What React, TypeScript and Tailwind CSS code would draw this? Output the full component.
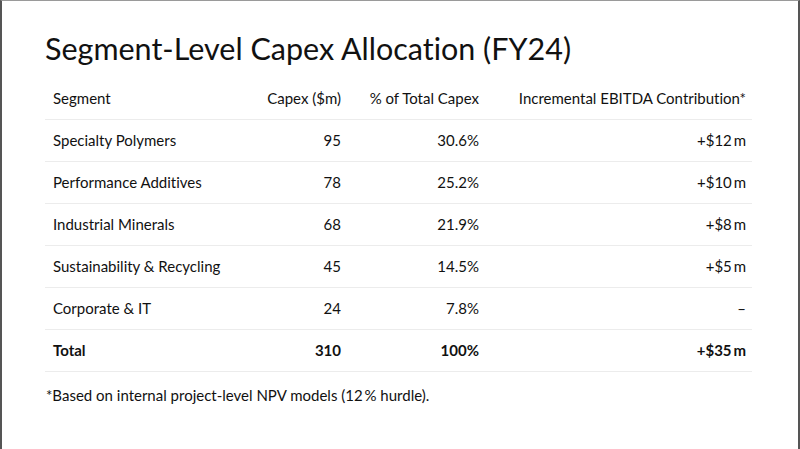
const rows = [
  { segment: "Specialty Polymers", capex: "95", pct: "30.6%", ebitda: "+$12\u2009m" },
  { segment: "Performance Additives", capex: "78", pct: "25.2%", ebitda: "+$10\u2009m" },
  { segment: "Industrial Minerals", capex: "68", pct: "21.9%", ebitda: "+$8\u2009m" },
  { segment: "Sustainability & Recycling", capex: "45", pct: "14.5%", ebitda: "+$5\u2009m" },
  { segment: "Corporate & IT", capex: "24", pct: "7.8%", ebitda: "\u2013" },
];

export default function App() {
  return (
    <div
      className="w-[800px] h-[449px] overflow-hidden bg-white text-[#111] border-t border-t-[#9a9a9a] border-x-2 border-x-[#555] pl-[43px] pr-[46px] [font-variant-ligatures:none]"
      style={{ fontFamily: "Lato, 'Noto Sans', sans-serif" }}
    >
      <h1 className="pt-[28px] mb-[10px] text-[30.5px] leading-[38px] font-normal">
        Segment-Level Capex Allocation (FY24)
      </h1>

      <table className="w-[707px] table-fixed border-collapse text-[15px]">
        <colgroup>
          <col className="w-[210px]" />
          <col className="w-[94px]" />
          <col className="w-[138px]" />
          <col className="w-[265px]" />
        </colgroup>
        <thead>
          <tr className="h-[42px] border-b border-[#ececec]">
            <th className="px-2 text-left font-normal">Segment</th>
            <th className="px-2 text-right font-normal">Capex ($m)</th>
            <th className="px-2 text-right font-normal">% of Total Capex</th>
            <th className="pl-2 pr-[6px] text-right font-normal">Incremental EBITDA Contribution*</th>
          </tr>
        </thead>
        <tbody>
          {rows.map((r) => (
            <tr key={r.segment} className="h-[42px] border-b border-[#ececec]">
              <td className="px-2">{r.segment}</td>
              <td className="px-2 text-right">{r.capex}</td>
              <td className="px-2 text-right">{r.pct}</td>
              <td className="pl-2 pr-[6px] text-right">{r.ebitda}</td>
            </tr>
          ))}
          <tr className="h-[42px] border-b border-[#ececec] font-bold">
            <td className="px-2">Total</td>
            <td className="px-2 text-right">310</td>
            <td className="px-2 text-right">100%</td>
            <td className="pl-2 pr-[6px] text-right">+$35{"\u2009"}m</td>
          </tr>
        </tbody>
      </table>

      <p className="mt-[12px] text-[15px] leading-[22px] pl-[1px]">
        *Based on internal project-level NPV models (12{"\u2009"}% hurdle).
      </p>
    </div>
  );
}
